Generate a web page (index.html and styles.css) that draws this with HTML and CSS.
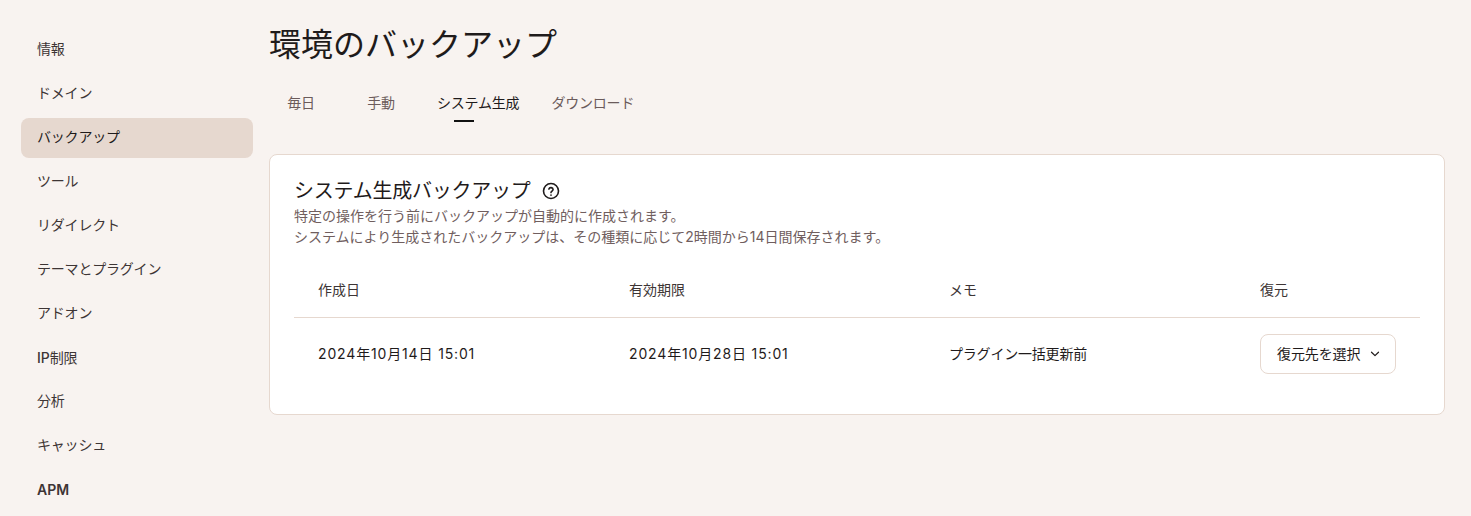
FILE: index.html
```
<!DOCTYPE html>
<html lang="ja">
<head>
<meta charset="utf-8">
<title>環境のバックアップ</title>
<link rel="stylesheet" href="styles.css">
</head>
<body>
<div class="layout">
  <nav class="sidebar">
    <a class="nav-item">情報</a>
    <a class="nav-item">ドメイン</a>
    <a class="nav-item active">バックアップ</a>
    <a class="nav-item">ツール</a>
    <a class="nav-item">リダイレクト</a>
    <a class="nav-item">テーマとプラグイン</a>
    <a class="nav-item">アドオン</a>
    <a class="nav-item mixed"><span><b class="latin">IP</b>制限</span></a>
    <a class="nav-item">分析</a>
    <a class="nav-item">キャッシュ</a>
    <a class="nav-item strong">APM</a>
  </nav>
  <main class="main">
    <h1 class="page-title">環境のバックアップ</h1>
    <div class="tabs">
      <a class="tab">毎日</a>
      <a class="tab">手動</a>
      <a class="tab selected">システム生成</a>
      <a class="tab">ダウンロード</a>
    </div>
    <section class="card">
      <div class="card-head">
        <h2 class="card-title">システム生成バックアップ</h2>
        <svg class="help" viewBox="0 0 18 18" width="18" height="18" fill="none" stroke="#1f1b1b" stroke-width="1.6" stroke-linecap="round" stroke-linejoin="round">
          <circle cx="9" cy="9" r="7.5"/>
          <path d="M6.9 7.1a2.15 2.15 0 0 1 4.2.5c0 1.4-2.1 1.8-2.1 3"/>
          <path d="M9 13.1v.1"/>
        </svg>
      </div>
      <p class="desc">特定の操作を行う前にバックアップが自動的に作成されます。<br>システムにより生成されたバックアップは、その種類に応じて2時間から14日間保存されます。</p>
      <table class="table">
        <thead>
          <tr><th class="c1">作成日</th><th class="c2">有効期限</th><th class="c3">メモ</th><th class="c4">復元</th></tr>
        </thead>
        <tbody>
          <tr>
            <td class="date">2024年10月14日 15:01</td>
            <td class="date">2024年10月28日 15:01</td>
            <td class="memo">プラグイン一括更新前</td>
            <td class="action">
              <button class="select-btn">復元先を選択
                <svg class="chev" viewBox="0 0 10 6" width="10" height="6" fill="none" stroke="#1f1b1b" stroke-width="1.2" stroke-linecap="round" stroke-linejoin="round"><path d="M1.5 1.2 5 4.6l3.5-3.4"/></svg>
              </button>
            </td>
          </tr>
        </tbody>
      </table>
    </section>
  </main>
</div>
</body>
</html>
```
FILE: styles.css
```
* { box-sizing: border-box; }
html, body { margin: 0; height: 100%; }
body {
  background: #f8f3f0;
  color: #1f1b1b;
  font-family: Inter, "Noto Sans CJK JP", sans-serif;
  font-size: 14px;
  overflow: hidden;
}
.layout { display: flex; align-items: flex-start; }
.sidebar {
  width: 269px;
  flex: none;
  padding: 30px 16px 0 21px;
  display: flex;
  flex-direction: column;
  gap: 4px;
}
.nav-item {
  height: 40px;
  display: flex;
  align-items: center;
  padding: 0 0 5px 16px;
  border-radius: 8px;
  color: #3d3535;
  letter-spacing: -0.2px;
}
.latin { font-weight: 500; letter-spacing: 0; }
.nav-item.mixed { padding-bottom: 3px; }
.nav-item.strong { font-weight: 600; letter-spacing: 0; padding-bottom: 1px; }
.nav-item.active { background: #e6d8cf; color: #1f1b1b; }
.main { flex: 1; padding: 0 26px 0 0; min-width: 0; }
.page-title {
  margin: 0;
  height: 88px;
  padding-top: 21px;
  font-size: 32px;
  line-height: 48px;
  font-weight: 400;
  color: #1f1b1b;
}
.tabs { display: flex; gap: 16px; height: 34px; }
.tab {
  min-width: 64px;
  padding: 0 8px;
  text-align: center;
  line-height: 30px;
  color: #6b5b5b;
  position: relative;
  letter-spacing: -0.2px;
}
.tab.selected { color: #1f1b1b; }
.tab.selected::after {
  content: "";
  position: absolute;
  left: 25px;
  bottom: 0;
  width: 20px;
  height: 2px;
  background: #111;
}
.card {
  margin-top: 32px;
  background: #fff;
  border: 1px solid #e6d8cf;
  border-radius: 8px;
  padding: 24px;
  height: 261px;
}
.card-head { display: flex; align-items: center; gap: 12px; height: 24px; }
.card-title { margin: 0; font-size: 20px; font-weight: 400; line-height: 24px; letter-spacing: -0.25px; }
.help { flex: none; }
.desc {
  margin: 2px 0 0;
  line-height: 21px;
  color: #705e5e;
}
.table { width: 100%; border-collapse: collapse; margin-top: 10px; table-layout: fixed; }
th, td { text-align: left; padding: 0 24px; font-weight: 400; }
th { height: 60px; padding-top: 5px; border-bottom: 1px solid #e6d8cf; color: #3d3535; }
td { height: 72px; }
.date { letter-spacing: 0.85px; }
.memo { letter-spacing: -0.2px; }
.action { padding-top: 2px; }
.c1 { width: 311px; }
.c2 { width: 320px; }
.c3 { width: 311px; }
.select-btn {
  height: 40px;
  width: 136px;
  background: #fff;
  border: 1px solid #e6d8cf;
  border-radius: 8px;
  font: inherit;
  color: #1f1b1b;
  letter-spacing: -0.1px;
  padding: 0 15px 2px 16px;
  display: flex;
  align-items: center;
  justify-content: space-between;
  white-space: nowrap;
}
.chev { flex: none; margin-top: 2px; }
```
